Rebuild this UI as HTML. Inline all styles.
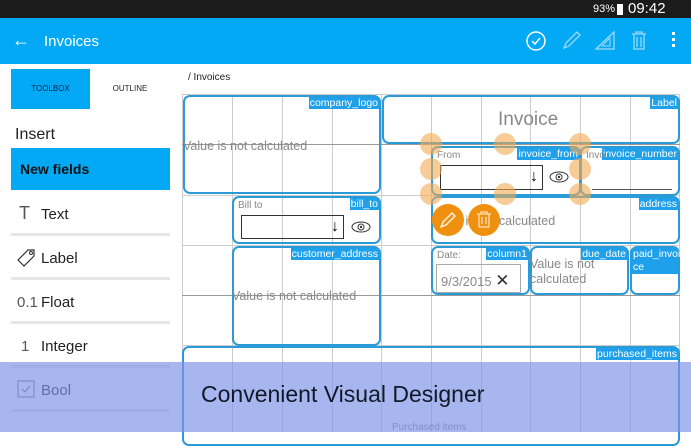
<!DOCTYPE html>
<html><head><meta charset="utf-8"><style>
*{margin:0;padding:0;box-sizing:border-box}
body{width:691px;height:432px;overflow:hidden;background:#fff;font-family:"Liberation Sans",sans-serif;position:relative}
.a{position:absolute}
.box{position:absolute;border:2px solid #2a9bd6;border-radius:7px}
.tag{position:absolute;right:0;top:0;background:#1ea0ea;color:#fff;font-size:10.5px;line-height:12px;padding:0 1px}
.vl{position:absolute;top:94px;bottom:0;width:1px;background:#ccc}
.hl{position:absolute;left:182px;right:11px;height:1px;background:#ccc}
.h{position:absolute;width:22px;height:22px;border-radius:50%;background:rgba(244,170,80,.6);margin:-11px 0 0 -11px}
.grey{color:#888}
.item{position:absolute;left:11px;width:159px;height:44px;border-bottom:3px solid #e6e6e6;font-size:15px;color:#222}
.item span{position:absolute;left:30px;top:14px}
</style></head><body>
<div class="a" style="left:0;top:0;width:691px;height:18px;background:#1b1b1b;color:#fff;font-size:15px">
<span class="a" style="left:593px;top:3px;font-size:11px">93%</span>
<span class="a" style="left:617px;top:4px;width:6px;height:11px;background:#fff"></span>
<span class="a" style="left:628px;top:0px">09:42</span>
</div>
<div class="a" style="left:0;top:18px;width:691px;height:46px;background:#03a9f4;color:#fff">
<span class="a" style="left:12px;top:12px;font-size:18px">&#8592;</span>
<span class="a" style="left:44px;top:15px;font-size:15px">Invoices</span>
<svg class="a" style="left:525px;top:12px" width="22" height="22"><circle cx="11" cy="11" r="9" fill="none" stroke="#fff" stroke-width="1.5"/><path d="M7 11l3 3 5-6" fill="none" stroke="#fff" stroke-width="1.5"/></svg>
<svg class="a" style="left:560px;top:11px" width="22" height="22"><path d="M4 19l2-5 11-11 3 3-11 11z" fill="none" stroke="#9fd9f7" stroke-width="1.3"/></svg>
<svg class="a" style="left:594px;top:11px" width="22" height="22"><path d="M2 20h18V3z" fill="none" stroke="#9fd9f7" stroke-width="1.3"/><path d="M8 17h8V9z" fill="none" stroke="#9fd9f7"/></svg>
<svg class="a" style="left:628px;top:11px" width="22" height="22"><path d="M4 5h14M8 5V3h6v2M6 5v15h10V5M9 8v10M13 8v10" fill="none" stroke="#9fd9f7" stroke-width="1.3"/></svg>
<span class="a" style="left:672px;top:14px;width:3px;height:3px;background:#fff;box-shadow:0 6px #fff,0 12px #fff"></span>
</div>
<div class="a" style="left:11px;top:69px;width:79px;height:40px;background:#03a9f4;color:#124;font-size:8px;text-align:center;line-height:40px">TOOLBOX</div>
<div class="a" style="left:90px;top:69px;width:80px;height:40px;color:#222;font-size:8px;text-align:center;line-height:40px">OUTLINE</div>
<div class="a" style="left:15px;top:126px;font-size:16px;color:#222">Insert</div>
<div class="a" style="left:11px;top:148px;width:159px;height:42px;background:#03a9f4;color:#111;font-size:14px;font-weight:bold;padding:13px 9px">New fields</div>
<div class="item" style="top:192px"><i class="a" style="left:8px;top:11px;font-style:normal;font-size:18px;color:#555">T</i><span>Text</span></div>
<div class="item" style="top:236px"><svg class="a" style="left:5px;top:12px" width="22" height="20"><path d="M2 12l10-10h6v6L8 18z" fill="none" stroke="#333" stroke-width="1.2"/><circle cx="15" cy="5" r="1.5" fill="none" stroke="#333"/></svg><span>Label</span></div>
<div class="item" style="top:280px"><i class="a" style="left:6px;top:14px;font-style:normal;font-size:15px;color:#555">0.1</i><span>Float</span></div>
<div class="item" style="top:324px"><i class="a" style="left:10px;top:14px;font-style:normal;font-size:15px;color:#555">1</i><span>Integer</span></div>
<div class="item" style="top:368px"><svg class="a" style="left:6px;top:12px" width="18" height="18"><rect x="1" y="1" width="16" height="16" fill="none" stroke="#666"/><path d="M5 9l3 3 5-6" fill="none" stroke="#666"/></svg><span>Bool</span></div>
<div class="a" style="left:188px;top:72px;font-size:10px;color:#222">/ Invoices</div>
<div class="vl" style="left:182px"></div><div class="vl" style="left:232px"></div><div class="vl" style="left:282px"></div><div class="vl" style="left:332px"></div><div class="vl" style="left:381px"></div><div class="vl" style="left:431px"></div><div class="vl" style="left:481px"></div><div class="vl" style="left:530px"></div><div class="vl" style="left:580px"></div><div class="vl" style="left:630px"></div><div class="vl" style="left:679px"></div>
<div class="hl" style="top:94px"></div><div class="hl" style="top:144px;background:#999"></div><div class="hl" style="top:195px"></div><div class="hl" style="top:245px"></div><div class="hl" style="top:295px;background:#999"></div><div class="hl" style="top:345px"></div>
<div class="box" style="left:183px;top:95px;width:198px;height:99px"><div class="tag">company_logo</div><div class="a grey" style="left:-2px;top:42px;font-size:12.5px">Value is not calculated</div></div>
<div class="box" style="left:382px;top:95px;width:298px;height:49px"><div class="tag">Label</div><div class="a grey" style="left:114px;top:12px;font-size:19px">Invoice</div></div>
<div class="box" style="left:431px;top:146px;width:150px;height:50px"><div class="tag">invoice_from</div><div class="a grey" style="left:4px;top:2px;font-size:10px">From</div><div class="a" style="left:7px;top:17px;width:103px;height:25px;border:1px solid #333"><span class="a" style="right:4px;top:2px;font-size:16px">&#8595;</span></div><svg class="a" style="left:116px;top:22px" width="20" height="14"><ellipse cx="10" cy="7" rx="9" ry="5" fill="none" stroke="#333"/><circle cx="10" cy="7" r="3" fill="none" stroke="#333"/><circle cx="10" cy="7" r="1.2" fill="#333"/></svg></div>
<div class="box" style="left:580px;top:146px;width:100px;height:50px"><div class="tag">invoice_number</div><div class="a grey" style="left:4px;top:2px;font-size:10px">Invo</div><div class="a" style="left:10px;top:41px;width:80px;height:1px;background:#555"></div></div>
<div class="box" style="left:232px;top:196px;width:149px;height:48px"><div class="tag">bill_to</div><div class="a grey" style="left:4px;top:2px;font-size:10px">Bill to</div><div class="a" style="left:7px;top:17px;width:103px;height:24px;border:1px solid #333"><span class="a" style="right:4px;top:2px;font-size:16px">&#8595;</span></div><svg class="a" style="left:117px;top:22px" width="20" height="14"><ellipse cx="10" cy="7" rx="9" ry="5" fill="none" stroke="#333"/><circle cx="10" cy="7" r="3" fill="none" stroke="#333"/><circle cx="10" cy="7" r="1.2" fill="#333"/></svg></div>
<div class="box" style="left:431px;top:196px;width:249px;height:48px"><div class="tag">address</div><div class="a grey" style="left:-2px;top:16px;font-size:12.5px">Value is not calculated</div></div>
<div class="box" style="left:232px;top:246px;width:149px;height:100px"><div class="tag">customer_address</div><div class="a grey" style="left:-2px;top:41px;font-size:12.5px">Value is not calculated</div></div>
<div class="box" style="left:431px;top:246px;width:99px;height:49px"><div class="tag">column1</div><div class="a grey" style="left:4px;top:2px;font-size:10px">Date:</div><div class="a grey" style="left:3px;top:16px;width:85px;height:29px;border:1px solid #aaa;font-size:13px;padding:6px 4px">9/3/2015 <span style="color:#333;font-size:17px">&#10005;</span></div></div>
<div class="box" style="left:530px;top:246px;width:99px;height:49px"><div class="tag">due_date</div><div class="a grey" style="left:-2px;top:9px;font-size:12.5px;line-height:15px">Value is not<br>calculated</div></div>
<div class="box" style="left:630px;top:246px;width:50px;height:49px"><div class="tag" style="width:46px;text-align:left;line-height:13px">paid_invoi ce</div></div>
<div class="box" style="left:182px;top:346px;width:498px;height:100px"><div class="tag">purchased_items</div><div class="a grey" style="left:208px;top:74px;font-size:10px">Purchased items</div></div>
<div class="h" style="left:431px;top:144px"></div><div class="h" style="left:505px;top:144px"></div><div class="h" style="left:580px;top:144px"></div><div class="h" style="left:431px;top:169px"></div><div class="h" style="left:580px;top:169px"></div><div class="h" style="left:431px;top:194px"></div><div class="h" style="left:505px;top:194px"></div><div class="h" style="left:580px;top:194px"></div>
<div class="a" style="left:432px;top:204px;width:32px;height:32px;border-radius:50%;background:#f0900f"><svg width="32" height="32"><path d="M9 23l2-5 9-9 3 3-9 9z" fill="none" stroke="#fff" stroke-width="1.3"/></svg></div>
<div class="a" style="left:468px;top:204px;width:32px;height:32px;border-radius:50%;background:#f0900f"><svg width="32" height="32"><path d="M9 10h14M13 10V8h6v2M11 10v13h10V10M14 13v7M18 13v7" fill="none" stroke="#fde0b8" stroke-width="1.3"/></svg></div>
<div class="a" style="left:0;top:362px;width:691px;height:70px;background:rgba(125,148,232,.68)"></div>
<div class="a" style="left:201px;top:381px;font-size:23px;color:#111827">Convenient Visual Designer</div>
</body></html>
